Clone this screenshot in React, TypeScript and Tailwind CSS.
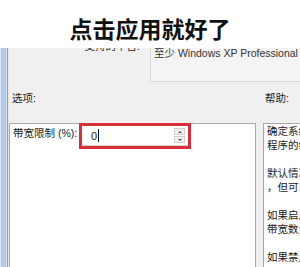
const HELP_LINES = [
  '确定系统可保留的连接带宽的百分比',
  '程序的组合保留带宽',
  '',
  '默认情况下，数据包计划程序将系统',
  '，但可以使用此设置来覆盖默认值',
  '',
  '如果启用此设置，则可以使用',
  '带宽数量',
  '',
  '如果禁用此设置或未配置此设置',
]

const font = "font-['Liberation_Sans','Noto_Sans_CJK_SC',sans-serif]"

export default function App() {
  return (
    <div className={`relative w-[300px] h-[267px] overflow-hidden bg-[#f0f0f0] flex text-[10.5px] text-[#1a1a1a] ${font}`}>
      {/* window edge */}
      <div className="flex shrink-0 h-full">
        <div className="w-px bg-[#dce7f5]" />
        <div className="w-[5px] bg-[#b2cbeb]" />
        <div className="w-px bg-[#d9dfe6]" />
        <div className="w-px bg-[#9a9ea4]" />
        <div className="w-px bg-[#e4e4e4]" />
      </div>

      <div className="flex-1 flex flex-col min-w-0">
        {/* requirements row */}
        <div className="flex mt-[36px] h-[46px]">
          <div className="w-[131px] text-right leading-[16px] pt-[2px] text-[#333]">支持的平台:</div>
          <div className="ml-[10px] flex-1 border border-r-0 border-[#dadada] bg-[#f4f4f4] pl-[3px] pt-[8px] leading-[16px] whitespace-nowrap overflow-hidden text-[#333]">
            至少 Windows XP Professional
          </div>
        </div>

        {/* section labels */}
        <div className="flex mt-[8px] h-[16px] leading-[16px]">
          <div className="w-[247px] pl-[3px]">选项:</div>
          <div className="ml-[7px] pl-[2px]">帮助:</div>
        </div>

        {/* panels */}
        <div className="flex mt-[17px] flex-1 min-h-0">
          <div className="w-[247px] bg-white border border-b-0 border-[#a8a8a8] flex items-start">
            <div className="w-[69px] pl-[3px] pt-px leading-[16px] whitespace-nowrap">带宽限制 (%):</div>
            <div className="-mt-px w-[112px] h-[26px] border-[3px] border-[#d8303a] flex">
              <div className="flex-1 bg-white border-b border-[#d4d4d4] flex items-center pl-[9px] pr-[3px]">
                <span className="leading-[16px] text-[11px]">0</span>
                <span className="w-px h-[13px] bg-black ml-[1px]" />
                <div className="ml-auto flex flex-col gap-px">
                  <div className="w-[11px] h-[7px] border border-[#cfcfcf] bg-[#f2f2f2] flex items-center justify-center">
                    <div className="w-0 h-0 border-x-[2px] border-x-transparent border-b-[2px] border-b-[#555]" />
                  </div>
                  <div className="w-[11px] h-[7px] border border-[#cfcfcf] bg-[#f2f2f2] flex items-center justify-center">
                    <div className="w-0 h-0 border-x-[2px] border-x-transparent border-t-[2px] border-t-[#555]" />
                  </div>
                </div>
              </div>
            </div>
          </div>

          <div className="ml-[7px] flex-1 bg-white border border-r-0 border-b-0 border-[#a8a8a8] pl-[3px] overflow-hidden">
            {HELP_LINES.map((line, i) => (
              <div key={i} className="h-[14px] leading-[14px] whitespace-nowrap">{line}</div>
            ))}
          </div>
        </div>
      </div>

      {/* subtitle banner */}
      <div className="absolute top-0 left-0 right-0 h-[48px] bg-white flex items-center justify-center pt-[9px]">
        <span className="text-[23px] font-bold text-[#111] font-['Noto_Sans_CJK_SC',sans-serif]">点击应用就好了</span>
      </div>
    </div>
  )
}
